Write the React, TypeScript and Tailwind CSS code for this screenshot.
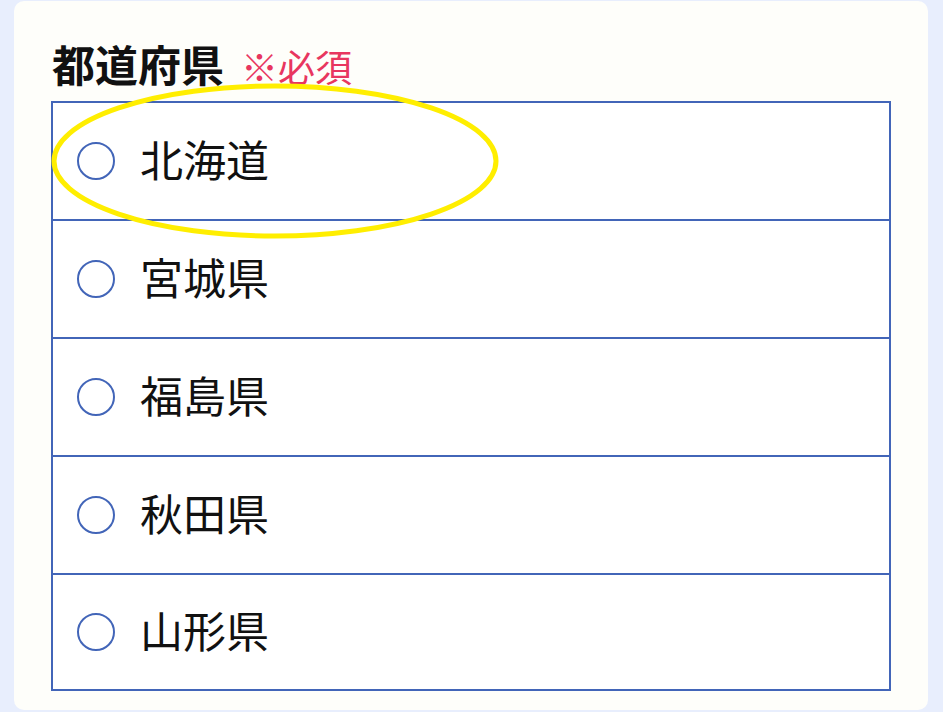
const prefectures = ['北海道', '宮城県', '福島県', '秋田県', '山形県'];

function RadioRow({ label, last }: { label: string; last: boolean }) {
  return (
    <label
      className={`flex items-center gap-[25px] bg-white pl-[24px] ${last ? 'h-[114px]' : 'h-[118px] border-b-2 border-[#4265b8]'}`}
    >
      <span className="h-[38px] w-[38px] shrink-0 rounded-full border-2 border-[#4265b8] bg-white" />
      <span className="pb-[5px] text-[43px] leading-none text-[#111]">{label}</span>
    </label>
  );
}

export default function App() {
  return (
    <div
      className="relative h-[712px] w-[943px] overflow-hidden bg-[#e8eefd] pl-[14px] pr-[15px] pt-[1px]"
      style={{ fontFamily: '"Noto Sans CJK JP", "Noto Sans", sans-serif' }}
    >
      <div className="h-[709px] rounded-[10px] bg-[#fefefa] px-[37px] pt-[41px]">
        <div className="flex items-end gap-[17px] pl-[1px]">
          <h2 className="text-[43px] font-bold leading-none text-[#111]">都道府県</h2>
          <span className="text-[37px] leading-none text-[#e8365f]">※必須</span>
        </div>
        <div className="mt-[16px] border-2 border-[#4265b8]">
          {prefectures.map((p, i) => (
            <RadioRow key={p} label={p} last={i === prefectures.length - 1} />
          ))}
        </div>
      </div>

      <svg className="pointer-events-none absolute left-0 top-0" width="943" height="712">
        <ellipse cx="275" cy="161" rx="221" ry="75" fill="none" stroke="#ffee00" strokeWidth="5" />
      </svg>
    </div>
  );
}
